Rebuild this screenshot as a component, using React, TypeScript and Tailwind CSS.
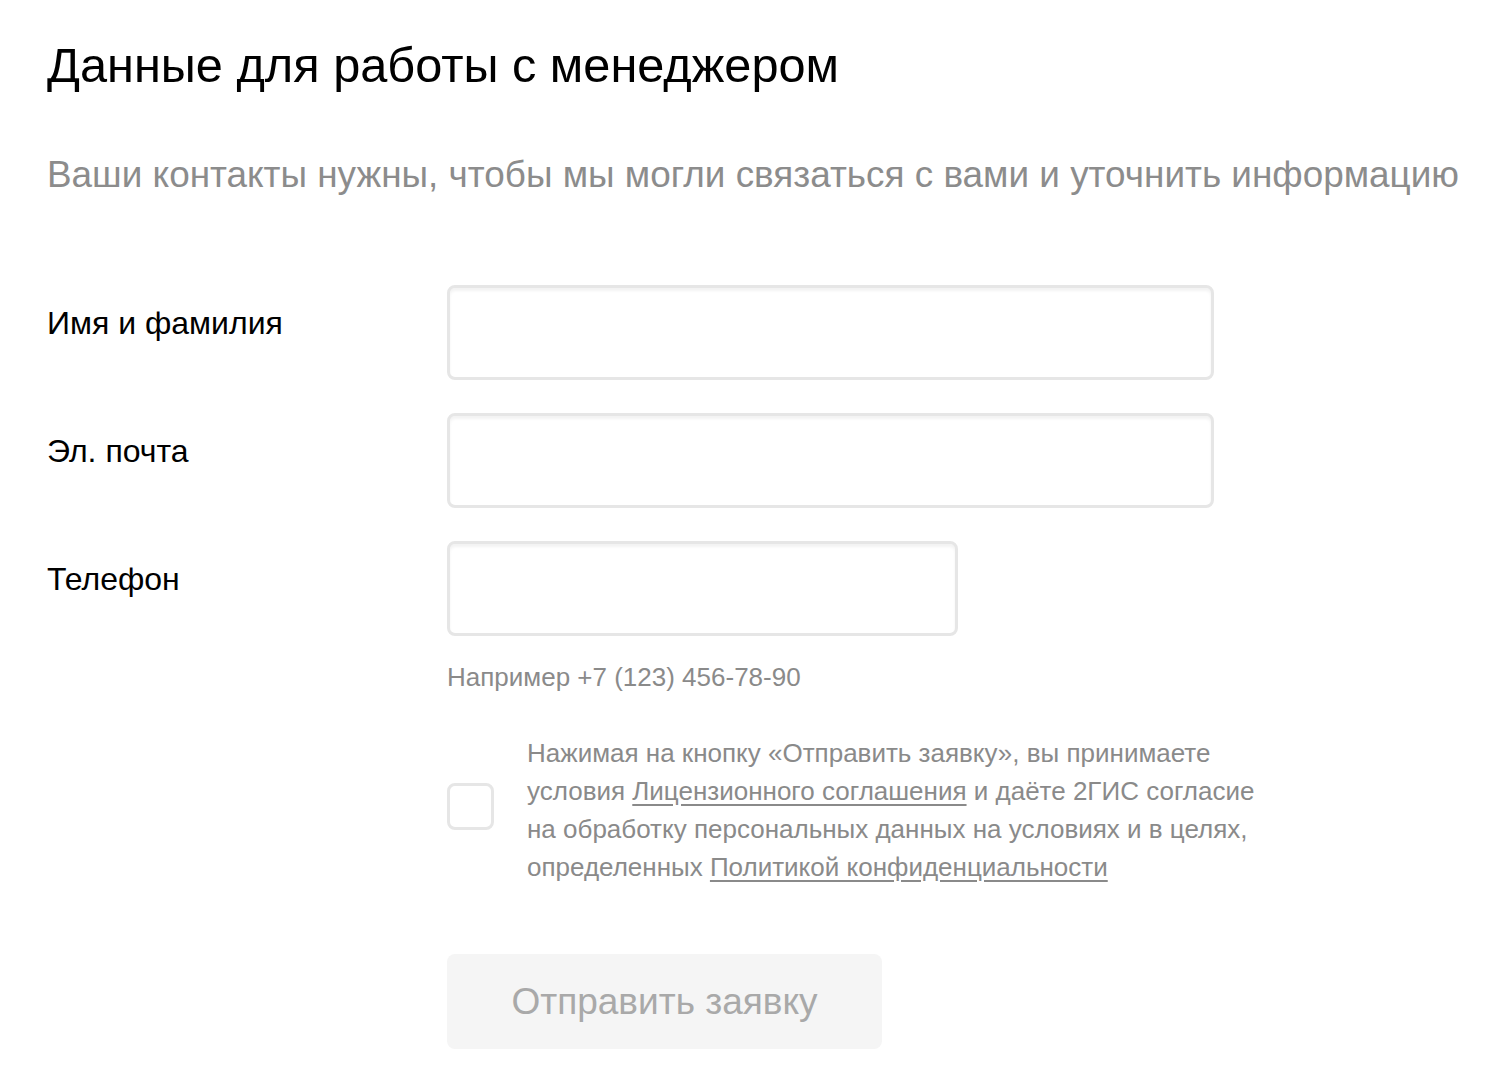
import React from "react";

const font = { fontFamily: '"Liberation Sans", Arial, sans-serif' };

function Field({ label, wide = true }: { label: string; wide?: boolean }) {
  return (
    <div className="flex items-start">
      <label className="w-[400px] shrink-0 pt-[19px] text-[32px] leading-[38px] text-black">{label}</label>
      <input
        type="text"
        className={`${wide ? "w-[767px]" : "w-[511px]"} h-[95px] rounded-[8px] border-[3px] border-[#e6e6e6] bg-white shadow-[inset_0_3px_3px_rgba(0,0,0,0.05)] outline-none`}
      />
    </div>
  );
}

export default function App() {
  return (
    <div className="min-h-screen bg-white pl-[47px] pt-[37px]" style={font}>
      <h1 className="text-[48.7px] leading-[56px] text-black">Данные для работы с менеджером</h1>
      <p className="mt-[60px] whitespace-nowrap text-[36.9px] leading-[44px] text-[#8c8c8c]">
        Ваши контакты нужны, чтобы мы могли связаться с вами и уточнить информацию
      </p>

      <div className="mt-[88px] flex flex-col gap-[33px]">
        <Field label="Имя и фамилия" />
        <Field label="Эл. почта" />
        <div>
          <Field label="Телефон" wide={false} />
          <div className="ml-[400px] mt-[26px] text-[26px] leading-[30px] text-[#8a8a8a]">Например +7 (123) 456-78-90</div>
        </div>
      </div>

      <div className="ml-[400px] mt-[42px] flex items-start gap-[33px]">
        <div className="mt-[49px] h-[47px] w-[47px] shrink-0 rounded-[8px] border-[3px] border-[#e6e6e6] bg-white" />
        <p className="w-[760px] text-[26px] leading-[38px] text-[#8a8a8a]">
          Нажимая на кнопку «Отправить заявку», вы принимаете
          <br />
          условия <a className="underline underline-offset-[4px]">Лицензионного соглашения</a> и даёте 2ГИС согласие
          <br />
          на обработку персональных данных на условиях и в целях,
          <br />
          определенных <a className="underline underline-offset-[4px]">Политикой конфиденциальности</a>
        </p>
      </div>

      <button className="ml-[400px] mt-[68px] flex h-[95px] w-[435px] items-center justify-center rounded-[8px] bg-[#f5f5f5] text-[37px] text-[#a9a9a9]">
        Отправить заявку
      </button>
    </div>
  );
}
